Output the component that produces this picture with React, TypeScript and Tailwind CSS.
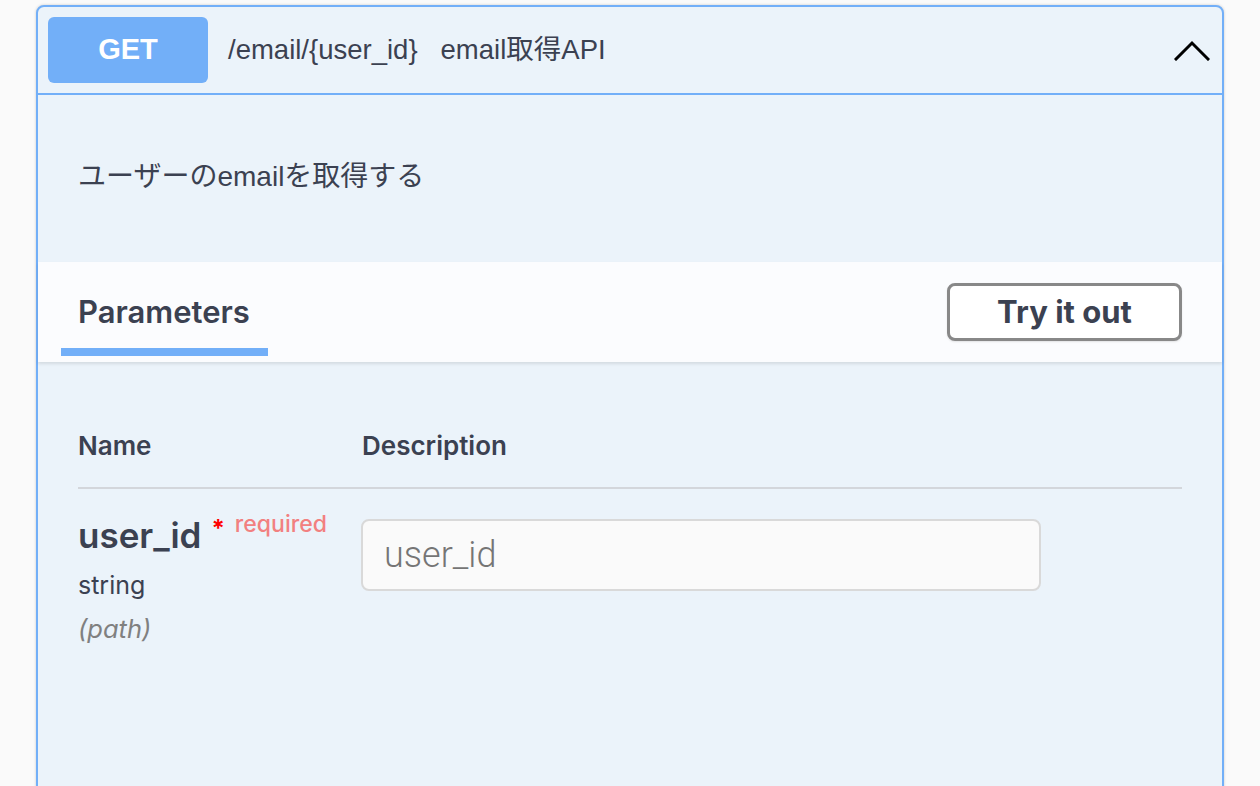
import React from 'react';

const SANS = "font-['Liberation_Sans','Noto_Sans_CJK_JP',sans-serif]";
const HEAD = "font-['Inter','Noto_Sans_CJK_JP',sans-serif]";

const ChevronUp: React.FC = () => (
  <svg width="36" height="22" viewBox="0 0 36 22" fill="none">
    <polyline points="2,20 18,4 34,20" stroke="#000" strokeWidth="3" strokeLinecap="square" />
  </svg>
);

const App: React.FC = () => {
  return (
    <div className="h-[786px] overflow-hidden bg-[#fafafa] px-[36px] pt-[5px]">
      <div className="h-[900px] rounded-t-[8px] border-2 border-[#72aff8] bg-[#ebf3fa] shadow-[0_0_3px_rgba(0,0,0,0.19)]">
        {/* summary */}
        <div className="flex h-[88px] items-center border-b-2 border-[#72aff8] px-[10px]">
          <div className={`flex h-[66px] w-[160px] items-center justify-center rounded-[6px] bg-[#72aff8] text-[29px] font-bold text-white ${SANS}`}>
            GET
          </div>
          <span className={`ml-[20px] text-[27.5px] text-[#3b4151] ${SANS}`}>/email/{'{user_id}'}</span>
          <span className={`ml-[23px] text-[27.5px] text-[#3b4151] ${SANS}`}>email取得API</span>
          <div className="ml-auto mr-[2px] flex items-center">
            <ChevronUp />
          </div>
        </div>

        {/* description */}
        <div className={`flex h-[160px] items-center px-[40px] pt-[3px] text-[28px] text-[#3b4151] ${SANS}`}>
          ユーザーのemailを取得する
        </div>

        {/* tab header */}
        <div className="mt-[7px] flex h-[100px] items-center justify-between bg-[#fbfcfe] px-[40px] shadow-[0_2px_3px_rgba(0,0,0,0.1)]">
          <div className="relative flex h-full items-center">
            <h4 className={`text-[31px] font-semibold text-[#3b4151] ${HEAD}`}>Parameters</h4>
            <div className="absolute bottom-[6px] left-[-17px] right-[-18px] h-[8px] bg-[#72aff8]" />
          </div>
          <button className={`flex h-[58px] w-[235px] items-center justify-center rounded-[8px] border-[3px] border-[#888888] bg-white text-[31px] font-bold text-[#3b4151] shadow-[0_1px_2px_rgba(0,0,0,0.1)] ${HEAD}`}>
            Try it out
          </button>
        </div>

        {/* parameters table */}
        <div className="px-[40px] pt-[42px]">
          <div className={`flex h-[85px] items-center border-b-2 border-[#d3d6db] text-[26px] font-semibold text-[#3b4151] ${HEAD}`}>
            <div className="w-[284px]">Name</div>
            <div>Description</div>
          </div>
          <div className="flex pt-[30px]">
            <div className={`w-[283px] ${HEAD}`}>
              <div className="flex items-start">
                <span className="text-[35px] font-semibold leading-[32px] text-[#3b4151]">user_id</span>
                <span className="ml-[10px] mt-[-2px] text-[24px] font-bold leading-[24px] text-[#ff0000]">*</span>
                <span className="ml-[10px] mt-[-6px] text-[23px] font-medium leading-[22px] text-[#f28080]">required</span>
              </div>
              <div className="mt-[21px] text-[25px] leading-[26px] text-[#3b4151]">string</div>
              <div className="mt-[18px] text-[25.5px] italic leading-[26px] text-[#808080]">(path)</div>
            </div>
            <div>
              <input
                placeholder="user_id"
                className={`h-[72px] w-[680px] rounded-[8px] border-2 border-[#d9d9d9] bg-[#fafafa] px-[21px] text-[36px] text-[#3b4151] outline-none placeholder:text-[#757575] font-['Roboto',sans-serif] font-light`}
              />
            </div>
          </div>
        </div>
      </div>
    </div>
  );
};

export default App;
